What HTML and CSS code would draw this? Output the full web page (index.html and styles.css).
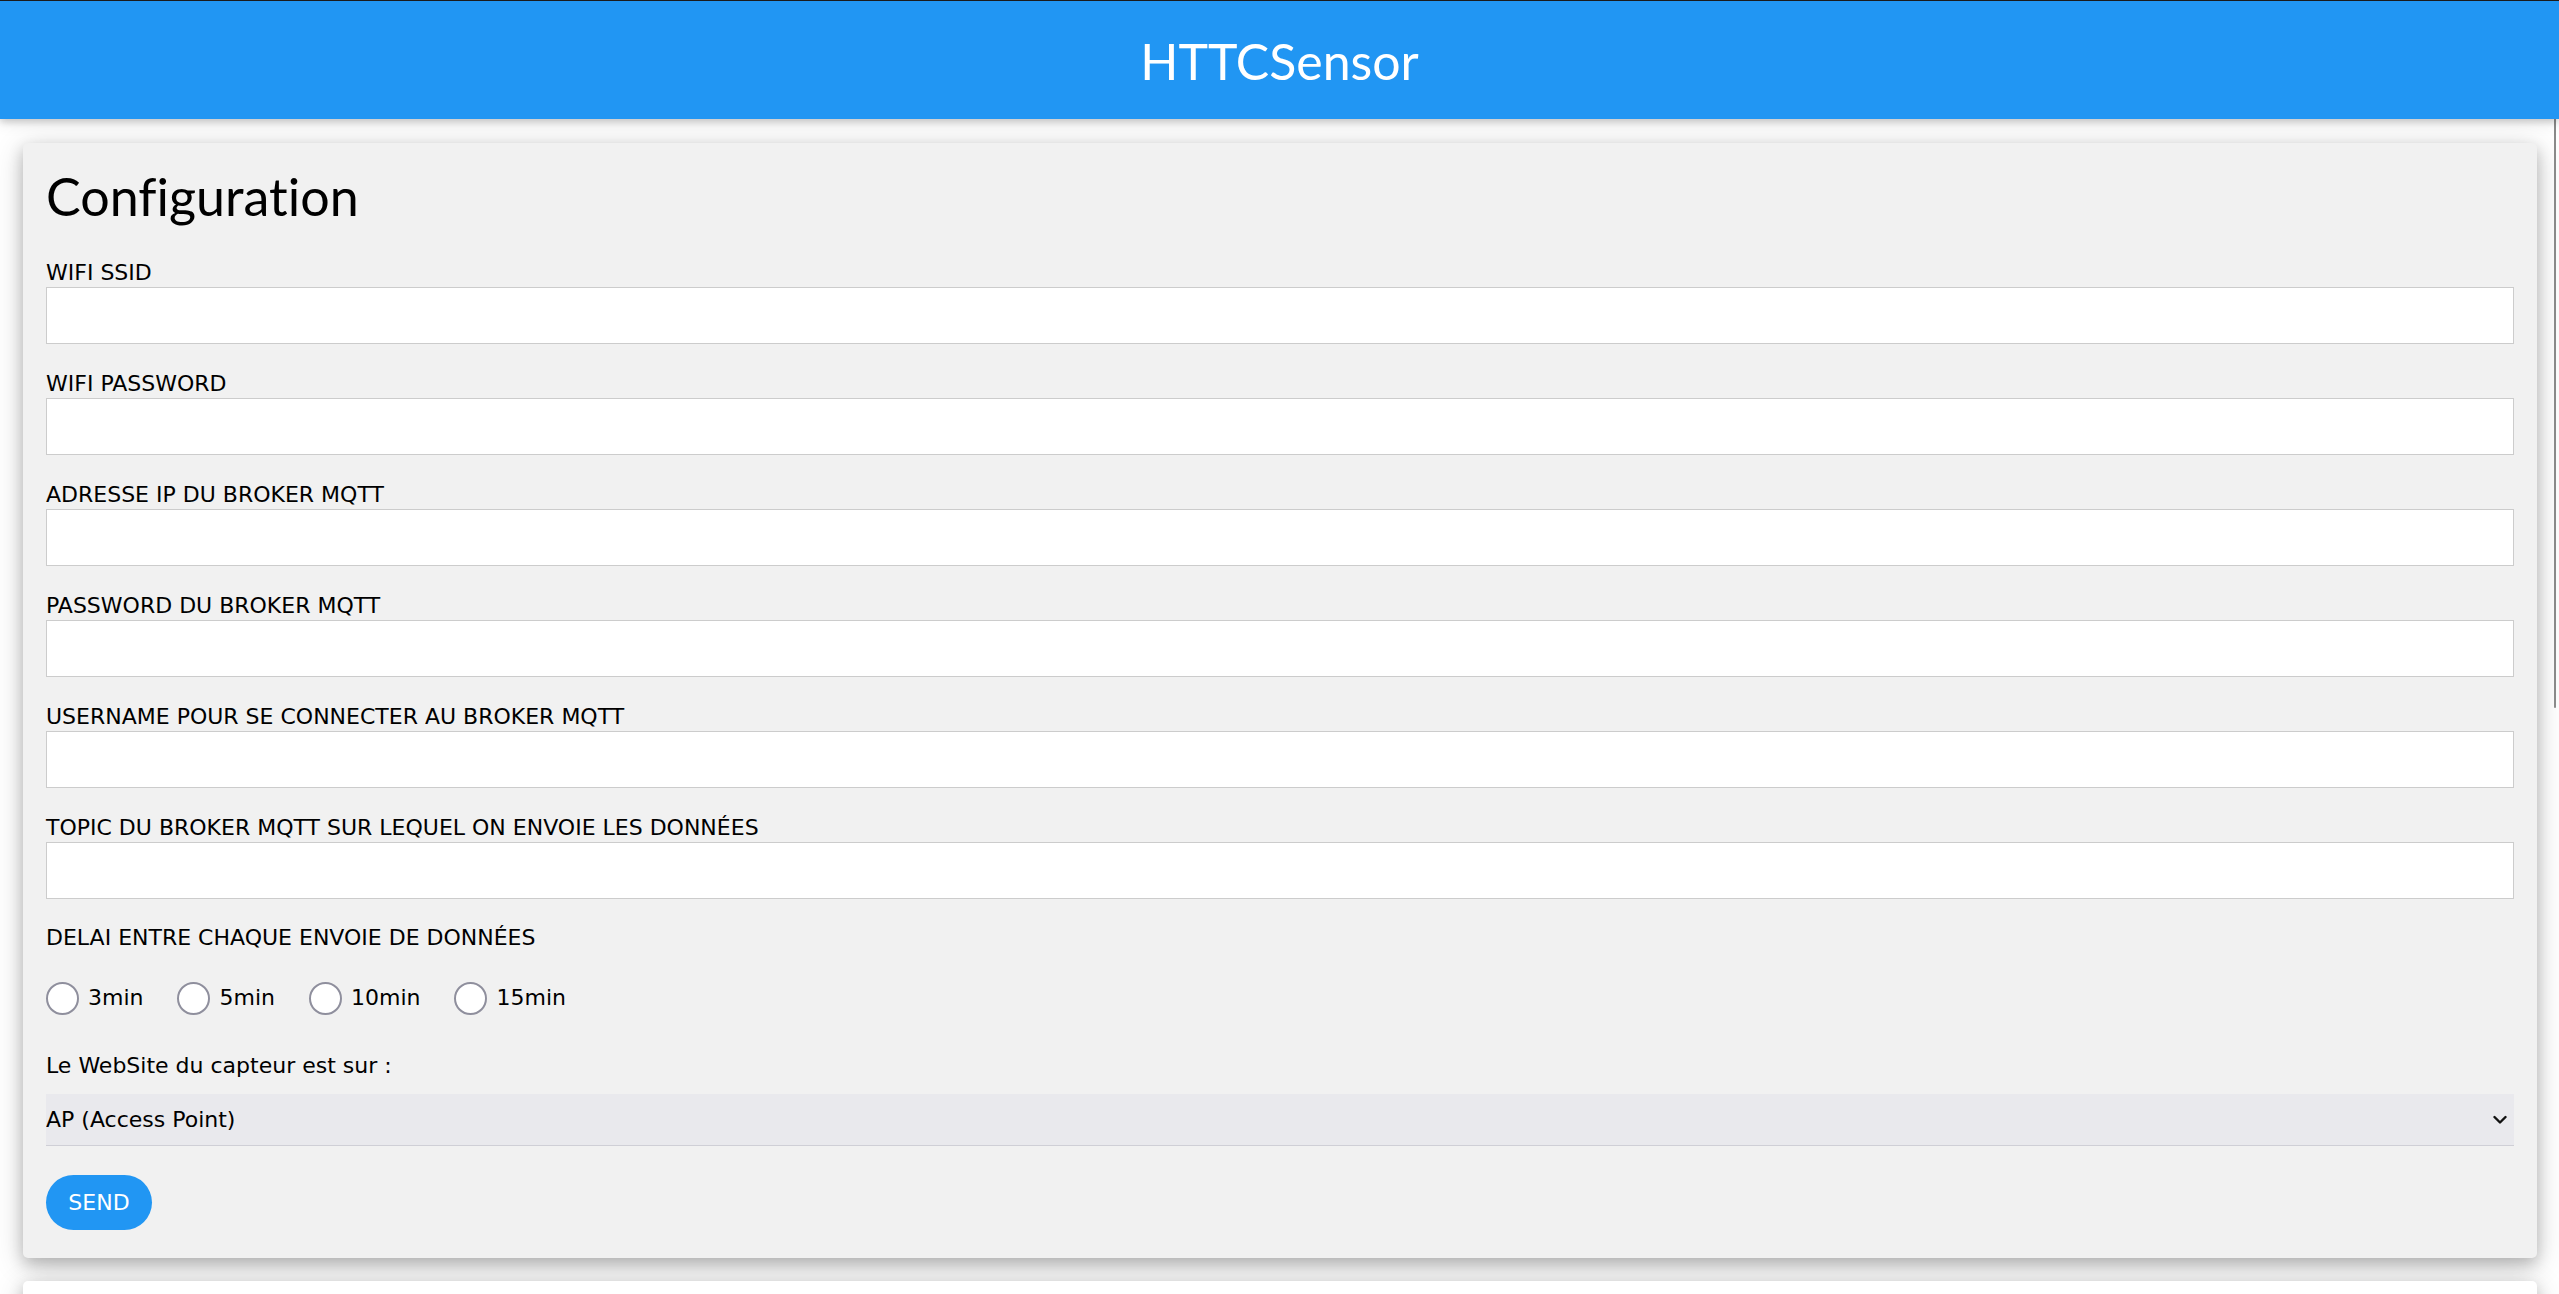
FILE: index.html
```html
<!DOCTYPE html>
<html lang="fr">
<head>
<meta charset="utf-8">
<title>HTTCSensor</title>
<link rel="stylesheet" href="styles.css">
</head>
<body>
<header class="topbar">
  <h1 class="brand">HTTCSensor</h1>
</header>

<main class="card">
  <h2 class="title">Configuration</h2>
  <form class="form">
    <div class="field">
      <label class="label" for="ssid">WIFI SSID</label>
      <input class="input" id="ssid" type="text">
    </div>
    <div class="field">
      <label class="label" for="pass">WIFI PASSWORD</label>
      <input class="input" id="pass" type="text">
    </div>
    <div class="field">
      <label class="label" for="ip">ADRESSE IP DU BROKER MQTT</label>
      <input class="input" id="ip" type="text">
    </div>
    <div class="field">
      <label class="label" for="bpass">PASSWORD DU BROKER MQTT</label>
      <input class="input" id="bpass" type="text">
    </div>
    <div class="field">
      <label class="label" for="user">USERNAME POUR SE CONNECTER AU BROKER MQTT</label>
      <input class="input" id="user" type="text">
    </div>
    <div class="field">
      <label class="label" for="topic">TOPIC DU BROKER MQTT SUR LEQUEL ON ENVOIE LES DONNÉES</label>
      <input class="input" id="topic" type="text">
    </div>

    <p class="label label-delay">DELAI ENTRE CHAQUE ENVOIE DE DONNÉES</p>
    <div class="radios">
      <label class="radio"><input class="radio-box" type="radio" name="delay"><span>3min</span></label>
      <label class="radio"><input class="radio-box" type="radio" name="delay"><span>5min</span></label>
      <label class="radio"><input class="radio-box" type="radio" name="delay"><span>10min</span></label>
      <label class="radio"><input class="radio-box" type="radio" name="delay"><span>15min</span></label>
    </div>

    <label class="label label-site" for="mode">Le WebSite du capteur est sur :</label>
    <div class="select-wrap">
      <select class="select" id="mode">
        <option>AP (Access Point)</option>
        <option>STA (Station)</option>
      </select>
      <svg class="chevron" width="14" height="10" viewBox="0 0 14 10" aria-hidden="true">
        <path d="M1.5 2 L7 7.5 L12.5 2" fill="none" stroke="#111" stroke-width="2.4" stroke-linecap="round" stroke-linejoin="round"/>
      </svg>
    </div>

    <button class="send" type="button">SEND</button>
  </form>
</main>

<section class="card card-next"></section>

<div class="scroll-thumb"></div>
</body>
</html>
```

FILE: styles.css
```css
html, body {
  margin: 0;
  padding: 0;
  background: #ffffff;
}

body {
  font-family: "DejaVu Sans", Verdana, sans-serif;
  font-size: 22px;
  color: #000;
  overflow: hidden;
}

.topbar {
  height: 118px;
  border-top: 1px solid #1b1b1b;
  background: #2196f3;
  color: #fff;
  box-shadow: 0 3px 7px 0 rgba(0,0,0,0.16), 0 3px 15px 0 rgba(0,0,0,0.12);
  position: relative;
  z-index: 1;
  display: flex;
  justify-content: center;
}

.brand {
  margin: 0;
  padding-top: 28px;
  font-family: Lato, "Open Sans", sans-serif;
  font-weight: 400;
  font-size: 50px;
  line-height: 64px;
  font-variant-ligatures: none;
}

.card {
  margin: 24px 22px 0 23px;
  padding: 21px 23px 28px;
  background: #f1f1f1;
  border-radius: 5px;
  box-shadow: 0 6px 15px 0 rgba(0,0,0,0.2), 0 6px 30px 0 rgba(0,0,0,0.19);
}

.title {
  margin: 0 0 31px;
  font-family: Lato, "Open Sans", sans-serif;
  font-weight: 400;
  font-size: 52px;
  line-height: 64px;
  font-variant-ligatures: none;
}

.form {
  display: flex;
  flex-direction: column;
  align-items: flex-start;
}

.field {
  display: flex;
  flex-direction: column;
  width: 100%;
}

.field + .field {
  margin-top: 26px;
}

.label {
  display: block;
  margin: 0;
  font-size: 22px;
  line-height: 27px;
}

.input {
  box-sizing: border-box;
  width: 100%;
  height: 57px;
  margin: 1px 0 0;
  padding: 12px;
  border: 1px solid #cccccc;
  background: #ffffff;
  font: inherit;
  outline: none;
}

.label-delay {
  margin-top: 25px;
}

.radios {
  display: flex;
  align-items: center;
  height: 34px;
  margin-top: 30px;
}

.radio {
  display: flex;
  align-items: center;
  gap: 9px;
  margin-right: 34px;
  line-height: 27px;
}

.radio-box {
  appearance: none;
  -webkit-appearance: none;
  box-sizing: border-box;
  width: 33px;
  height: 33px;
  margin: 0;
  border: 2px solid #8f8f9d;
  border-radius: 50%;
  background: #ffffff;
}

.radio span {
  position: relative;
  top: -1px;
}

.label-site {
  margin-top: 37px;
}

.select-wrap {
  position: relative;
  width: 100%;
  margin-top: 15px;
}

.select {
  appearance: none;
  -webkit-appearance: none;
  box-sizing: border-box;
  display: block;
  width: 100%;
  height: 52px;
  margin: 0;
  padding: 0;
  border: none;
  border-bottom: 1px solid #cfcfd6;
  border-radius: 0;
  background: #e9e9ed;
  color: #000;
  font: inherit;
  line-height: 51px;
}

.chevron {
  position: absolute;
  right: 7px;
  top: 21px;
  pointer-events: none;
}

.send {
  margin-top: 29px;
  width: 106px;
  height: 55px;
  padding: 0;
  border: none;
  border-radius: 28px;
  background: #2196f3;
  color: #ffffff;
  font: inherit;
  font-size: 22px;
}

.card-next {
  margin-top: 23px;
  height: 120px;
  padding: 0;
  background: #ffffff;
  border-radius: 5px 5px 0 0;
}

.scroll-thumb {
  position: fixed;
  top: 15px;
  left: 2554px;
  width: 2px;
  height: 693px;
  background: #8a8a8a;
  border-radius: 1px;
}
```
